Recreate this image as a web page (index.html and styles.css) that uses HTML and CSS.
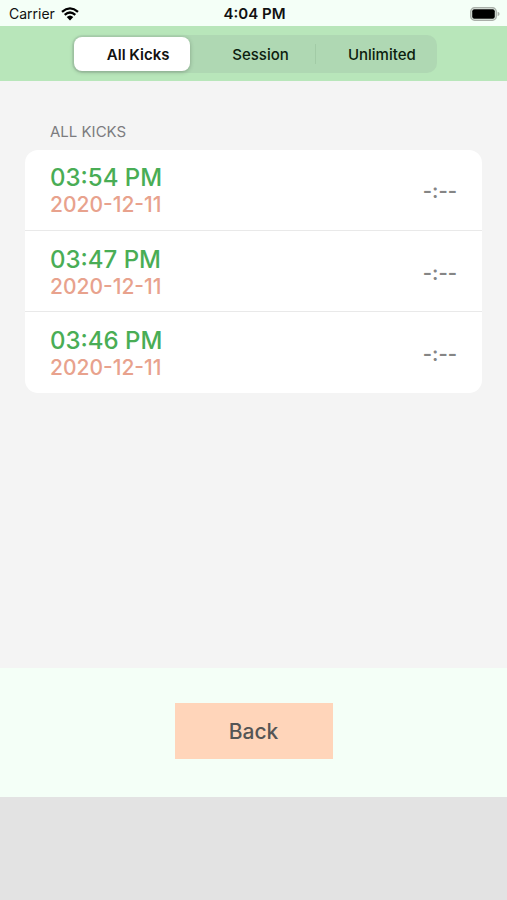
FILE: index.html
```
<!DOCTYPE html>
<html lang="en">
<head>
<meta charset="utf-8">
<meta name="viewport" content="width=device-width, initial-scale=1">
<title>All Kicks</title>
<link rel="stylesheet" href="styles.css">
</head>
<body>
<header class="status">
  <div class="carrier">
    <span>Carrier</span>
    <svg class="wifi" viewBox="0 0 18 14" aria-hidden="true">
      <path d="M1 4.8Q9-2 17 4.8M3.7 7.8Q9 3.2 14.3 7.8" fill="none" stroke="#000" stroke-width="2.3"/>
      <path d="M5.7 10Q9 7 12.3 10L9 13.5Z"/>
    </svg>
  </div>
  <time class="clock">4:04 PM</time>
  <svg class="battery" viewBox="0 0 30 14" aria-hidden="true">
    <rect x="0.8" y="0.8" width="25.4" height="12.4" rx="3.8" fill="none" stroke="#a9afa9" stroke-width="1.5"/>
    <rect x="2.2" y="2.2" width="22.6" height="9.6" rx="2"/>
    <path d="M27.6 4.8Q29.6 5.4 29.6 7T27.6 9.2Z" fill="#a9afa9"/>
  </svg>
</header>
<nav class="topbar">
  <div class="segments">
    <button class="segment selected" type="button">All Kicks</button>
    <button class="segment" type="button">Session</button>
    <button class="segment divided" type="button">Unlimited</button>
  </div>
</nav>
<main class="content">
  <h1 class="heading">ALL KICKS</h1>
  <ul class="kicks">
    <li class="kick">
      <div><div class="time">03:54 PM</div><div class="date">2020-12-11</div></div>
      <span class="interval">-:--</span>
    </li>
    <li class="kick">
      <div><div class="time">03:47 PM</div><div class="date">2020-12-11</div></div>
      <span class="interval">-:--</span>
    </li>
    <li class="kick">
      <div><div class="time">03:46 PM</div><div class="date">2020-12-11</div></div>
      <span class="interval">-:--</span>
    </li>
  </ul>
</main>
<footer class="actions">
  <button class="back" type="button">Back</button>
</footer>
<div class="banner"></div>
</body>
</html>
```
FILE: styles.css
```
* {
  box-sizing: border-box;
}

body {
  margin: 0;
  min-height: 100vh;
  display: flex;
  flex-direction: column;
  background: #f4f4f4;
  color: #111;
  font-family: Inter, "Liberation Sans", sans-serif;
}

button {
  border: 0;
  font-family: inherit;
}

.status {
  display: grid;
  grid-template-columns: 1fr auto 1fr;
  align-items: center;
  height: 26px;
  padding: 1px 7px 0 9px;
  background: #f4fff7;
  font-size: 14px;
  line-height: 24px;
}

.carrier {
  display: flex;
  align-items: center;
  gap: 6px;
}

.wifi {
  width: 18px;
  height: 14px;
}

.clock {
  font-size: 15px;
  font-weight: 600;
}

.battery {
  width: 30px;
  height: 14px;
  justify-self: end;
}

.topbar {
  padding: 9px 70px 8px 72px;
  background: #b8e6ba;
}

.segments {
  display: grid;
  grid-template-columns: repeat(3, 1fr);
  padding: 2px;
  border-radius: 10px;
  background: #afd8b3;
}

.segment {
  height: 34px;
  padding: 0 0 0 12px;
  border-radius: 8px;
  background: none;
  color: #0c200e;
  font-size: 15px;
  font-weight: 500;
}

.selected {
  margin-right: 4px;
  background: #fff;
  box-shadow: 0 1px 4px rgb(0 0 0 / 25%);
  color: #111;
  font-weight: 600;
}

.divided {
  padding-left: 14px;
  background: linear-gradient(#a2cba6, #a2cba6) left / 1px 20px no-repeat;
  border-radius: 0;
}

.content {
  flex: 1;
  padding: 41px 25px 0;
}

.heading {
  margin: 0 25px 8px;
  color: #7c7c7f;
  font-size: 15px;
  font-weight: 400;
  line-height: 20px;
}

.kicks {
  margin: 0;
  padding: 0 0 1px;
  border-radius: 13px;
  background: #fff;
  list-style: none;
}

.kick {
  display: flex;
  align-items: center;
  justify-content: space-between;
  padding: 14px 25px 12px;
}

.kick + .kick {
  padding-top: 15px;
  padding-bottom: 11px;
  border-top: 1px solid #e9e9e9;
}

.time {
  color: #49ad55;
  font-size: 24px;
  font-weight: 500;
  line-height: 28px;
}

.date {
  color: #e8a28d;
  font-size: 21px;
  font-weight: 500;
  line-height: 26px;
}

.interval {
  color: #858585;
  font-size: 20px;
  font-weight: 600;
}

.actions {
  display: flex;
  justify-content: center;
  padding: 35px 0 38px;
  background: #f4fff7;
}

.back {
  width: 158px;
  height: 56px;
  background: #ffd5ba;
  color: #555;
  font-size: 21px;
  font-weight: 500;
}

.banner {
  height: 103px;
  background: #e3e3e3;
}
```
